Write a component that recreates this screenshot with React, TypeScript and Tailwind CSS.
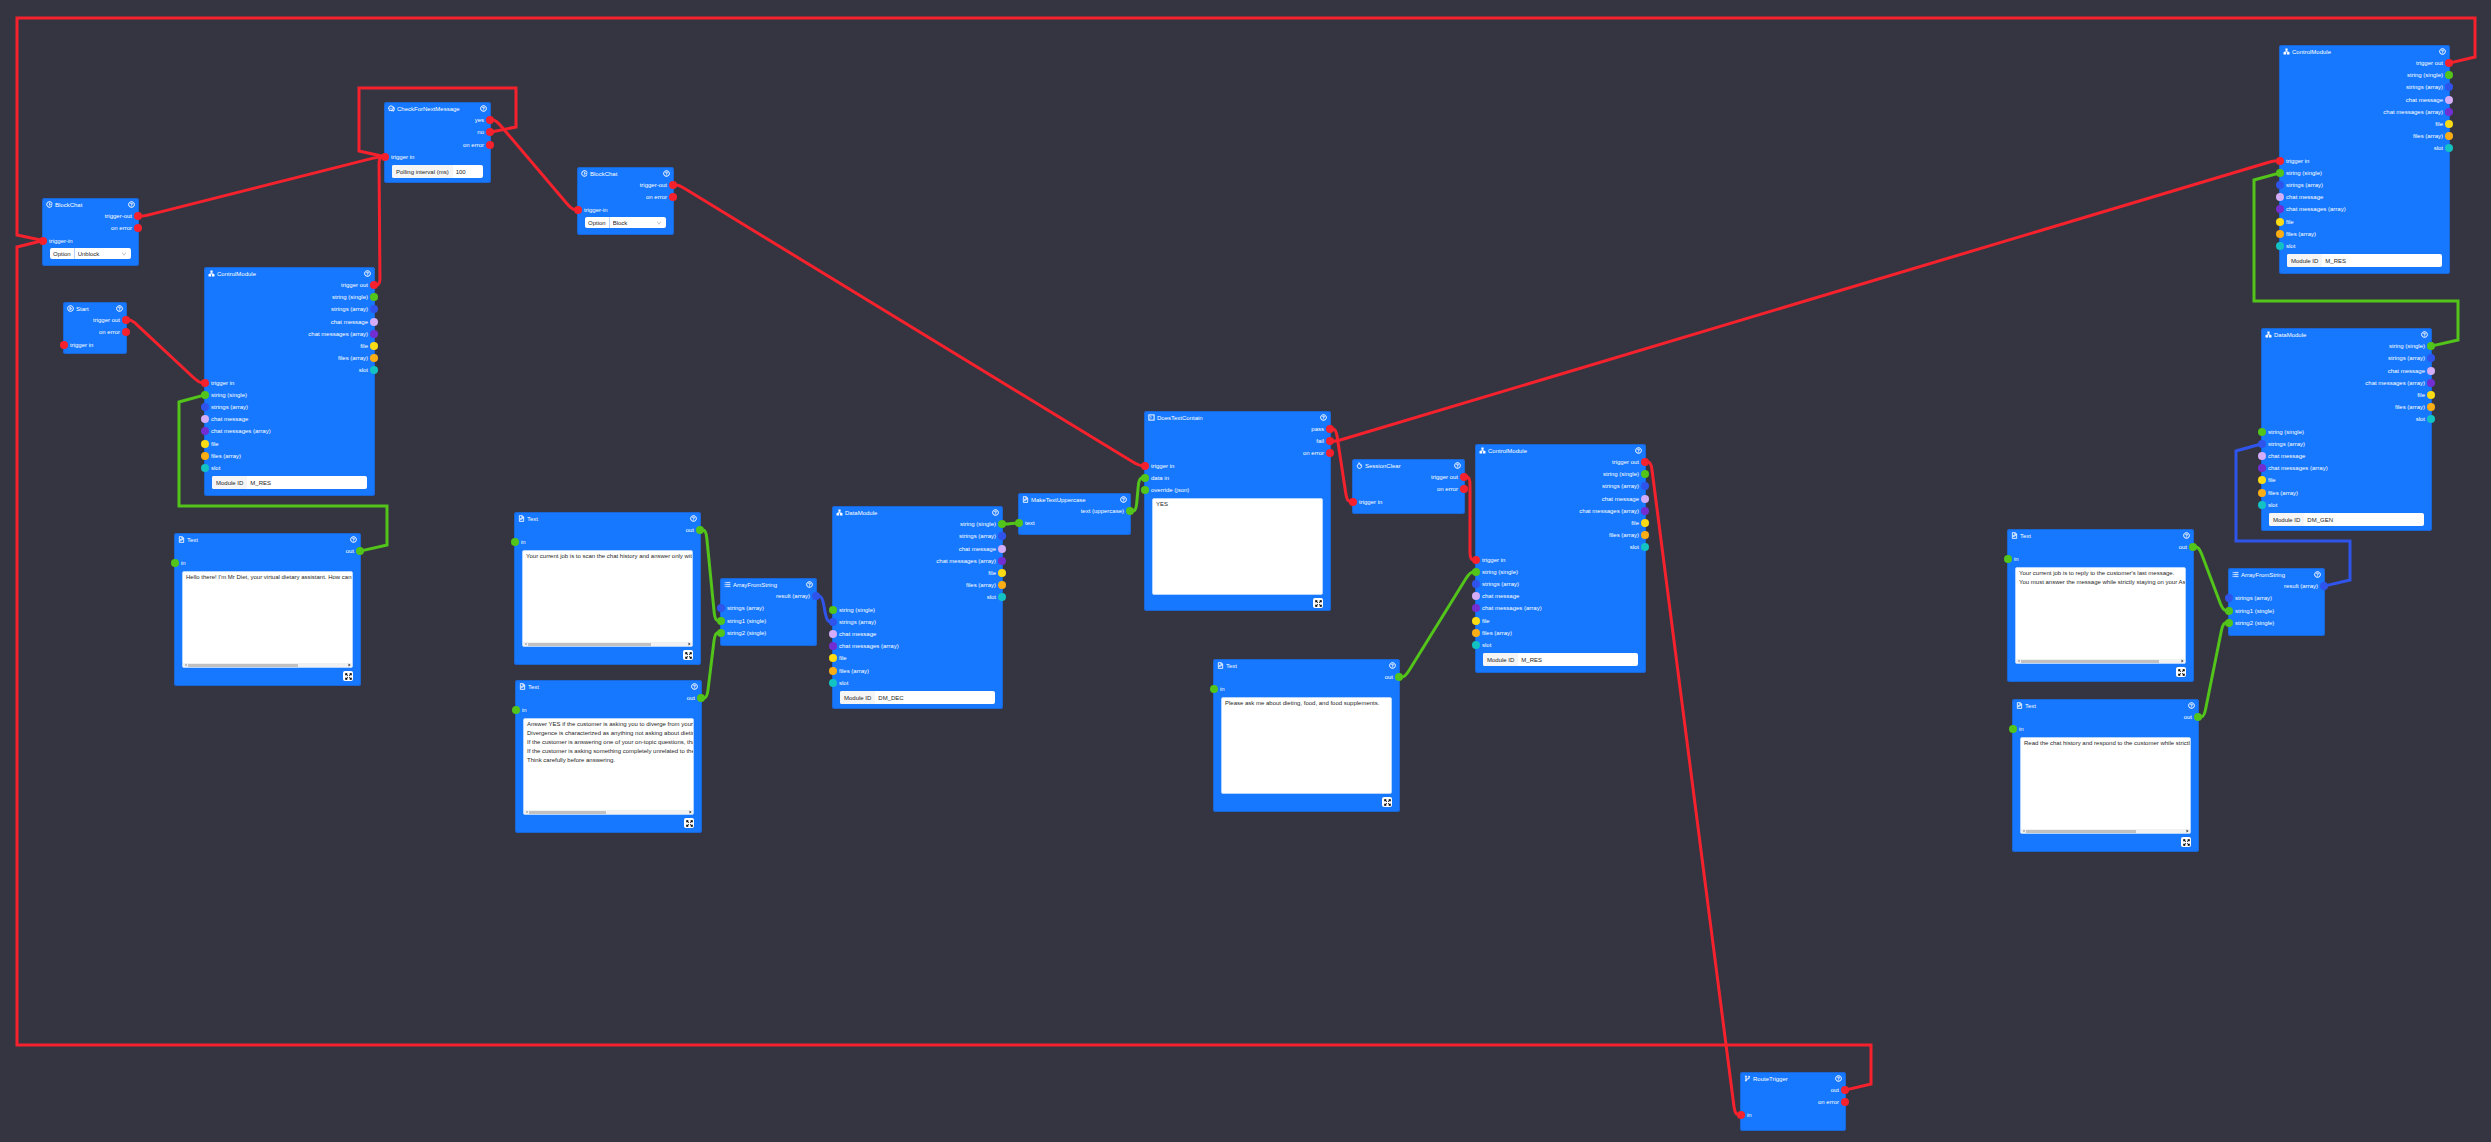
import { useId } from "react";
import type { ReactNode } from "react";
import {
  AiOutlineBranches,
  AiOutlineComment,
  AiOutlineDown,
  AiOutlineFileText,
  AiOutlineFire,
  AiOutlineIssuesClose,
  AiOutlinePlayCircle,
  AiOutlineQuestionCircle,
  AiOutlineUnorderedList,
} from "react-icons/ai";

type Kind = "trigger" | "string" | "strings" | "chat" | "chats" | "file" | "files" | "slot";
type Port = { label: string; kind: Kind };

const DOT: Record<Kind, string> = {
  trigger: "bg-[#f5222d]",
  string: "bg-[#52c41a]",
  strings: "bg-[#2f54eb]",
  chat: "bg-[#d3adf7]",
  chats: "bg-[#722ed1]",
  file: "bg-[#fadb14]",
  files: "bg-[#faad14]",
  slot: "bg-[#13c2c2]",
};

const STROKE = { red: "#f5222d", green: "#52c41a", blue: "#2f54eb" };

const ICON = "size-full stroke-current stroke-[50]";

const HEADER = 12;
const ROW = 12.2;

const t = (label: string): Port => ({ label, kind: "trigger" });
const s = (label: string): Port => ({ label, kind: "string" });
const a = (label: string): Port => ({ label, kind: "strings" });

const DATA: Port[] = [
  s("string (single)"),
  a("strings (array)"),
  { label: "chat message", kind: "chat" },
  { label: "chat messages (array)", kind: "chats" },
  { label: "file", kind: "file" },
  { label: "files (array)", kind: "files" },
  { label: "slot", kind: "slot" },
];

type Content =
  | { type: "input"; label: string; value: string }
  | { type: "select"; label: string; value: string; options: string[] }
  | { type: "text"; label: string; value: string; thumb?: number };

type NodeData = {
  title: string;
  icon: ReactNode;
  x: number;
  y: number;
  w: number;
  h: number;
  outs: Port[];
  ins: Port[];
  content?: Content;
};

function ModuleIcon() {
  return (
    <svg viewBox="-1 -1 14 14" fill="none" stroke="currentColor" className="size-full">
      <rect x="3.8" y="0" width="4.4" height="4.4" fill="currentColor" stroke="none" />
      <path d="M6 4v2.5M2.5 8V6.5h7V8" strokeWidth="1.6" />
      <rect x="0" y="7.2" width="5.2" height="4.8" fill="currentColor" stroke="none" />
      <rect x="6.8" y="7.2" width="5.2" height="4.8" fill="currentColor" stroke="none" />
    </svg>
  );
}

function ContainIcon() {
  return (
    <svg viewBox="-1 -1 14 14" fill="none" stroke="currentColor" className="size-full">
      <rect x="0.8" y="0.8" width="10.4" height="10.4" strokeWidth="2" />
      <path d="M3.5 3.5l2.6 2-2.6 2" strokeWidth="1.5" />
    </svg>
  );
}

function ExpandIcon() {
  return (
    <svg viewBox="0 0 12 12" fill="none" stroke="currentColor" strokeWidth="1.3" className="size-[7px]">
      <path d="M1 4V1h3M8 1h3v3M11 8v3H8M4 11H1V8" />
      <path d="M1.2 1.2l3.4 3.4M10.8 1.2L7.4 4.6M10.8 10.8L7.4 7.4M1.2 10.8l3.4-3.4" strokeWidth="1.8" />
    </svg>
  );
}

const UNBLOCK = ["Unblock", "Block"];

function textNode(x: number, y: number, value: string, thumb?: number): NodeData {
  return {
    title: "Text",
    icon: <AiOutlineFileText className={ICON} />,
    x,
    y,
    w: 187,
    h: 153,
    outs: [s("out")],
    ins: [s("in")],
    content: { type: "text", label: "Text", value, thumb },
  };
}

function controlNode(x: number, y: number): NodeData {
  return {
    title: "ControlModule",
    icon: <ModuleIcon />,
    x,
    y,
    w: 171,
    h: 229,
    outs: [t("trigger out"), ...DATA],
    ins: [t("trigger in"), ...DATA],
    content: { type: "input", label: "Module ID", value: "M_RES" },
  };
}

function dataNode(x: number, y: number, value: string): NodeData {
  return {
    title: "DataModule",
    icon: <ModuleIcon />,
    x,
    y,
    w: 171,
    h: 203,
    outs: DATA,
    ins: DATA,
    content: { type: "input", label: "Module ID", value },
  };
}

function arrayNode(x: number, y: number): NodeData {
  return {
    title: "ArrayFromString",
    icon: <AiOutlineUnorderedList className={ICON} />,
    x,
    y,
    w: 97,
    h: 68,
    outs: [a("result (array)")],
    ins: [a("strings (array)"), s("string1 (single)"), s("string2 (single)")],
  };
}

function blockNode(x: number, y: number, value: string): NodeData {
  return {
    title: "BlockChat",
    icon: <AiOutlineIssuesClose className={ICON} />,
    x,
    y,
    w: 97,
    h: 68,
    outs: [t("trigger-out"), t("on error")],
    ins: [t("trigger-in")],
    content: { type: "select", label: "Option", value, options: UNBLOCK },
  };
}

const NODES = {
  unblock: blockNode(42, 198, "Unblock"),
  start: {
    title: "Start",
    icon: <AiOutlinePlayCircle className={ICON} />,
    x: 63,
    y: 302,
    w: 64,
    h: 52,
    outs: [t("trigger out"), t("on error")],
    ins: [t("trigger in")],
  } as NodeData,
  greet: controlNode(204, 267),
  greetText: textNode(174, 533, "Hello there! I'm Mr Diet, your virtual dietary assistant. How can I help", 110),
  check: {
    title: "CheckForNextMessage",
    icon: <AiOutlineComment className={ICON} />,
    x: 384,
    y: 102,
    w: 107,
    h: 81,
    outs: [t("yes"), t("no"), t("on error")],
    ins: [t("trigger in")],
    content: { type: "input", label: "Polling interval (ms)", value: "100" },
  } as NodeData,
  block: blockNode(577, 167, "Block"),
  scanText: textNode(514, 512, "Your current job is to scan the chat history and answer only with the", 123),
  rulesText: textNode(
    515,
    680,
    [
      "Answer YES if the customer is asking you to diverge from your Assigned",
      "Divergence is characterized as anything not asking about dieting, food",
      "If the customer is answering one of your on-topic questions, that is",
      "If the customer is asking something completely unrelated to the chat",
      "Think carefully before answering.",
    ].join("\n"),
    77,
  ),
  decideArray: arrayNode(720, 578),
  decide: dataNode(832, 506, "DM_DEC"),
  upper: {
    title: "MakeTextUppercase",
    icon: <AiOutlineFileText className={ICON} />,
    x: 1018,
    y: 493,
    w: 113,
    h: 42,
    outs: [s("text (uppercase)")],
    ins: [s("text")],
  } as NodeData,
  contain: {
    title: "DoesTextContain",
    icon: <ContainIcon />,
    x: 1144,
    y: 411,
    w: 187,
    h: 200,
    outs: [t("pass"), t("fail"), t("on error")],
    ins: [t("trigger in"), s("data in"), s("override (json)")],
    content: { type: "text", label: "Contains", value: "YES" },
  } as NodeData,
  clear: {
    title: "SessionClear",
    icon: <AiOutlineFire className={ICON} />,
    x: 1352,
    y: 459,
    w: 113,
    h: 55,
    outs: [t("trigger out"), t("on error")],
    ins: [t("trigger in")],
  } as NodeData,
  offTopicText: textNode(1213, 659, "Please ask me about dieting, food, and food supplements."),
  offTopic: controlNode(1475, 444),
  route: {
    title: "RouteTrigger",
    icon: <AiOutlineBranches className={ICON} />,
    x: 1740,
    y: 1072,
    w: 106,
    h: 59,
    outs: [t("out"), t("on error")],
    ins: [t("in")],
  } as NodeData,
  replyText: textNode(
    2007,
    529,
    "Your current job is to reply to the customer's last message.\nYou must answer the message while strictly staying on your Assigned",
    138,
  ),
  historyText: textNode(
    2012,
    699,
    "Read the chat history and respond to the customer while strictly staying",
    110,
  ),
  replyArray: arrayNode(2228, 568),
  generate: dataNode(2261, 328, "DM_GEN"),
  respond: controlNode(2279, 45),
};

type NodeId = keyof typeof NODES;
type End = [NodeId, number];
type Point = [number, number];

/* Ports are counted from the top of a node, outputs first. */
const EDGES: { from: End; to: End; color: keyof typeof STROKE; via?: Point[] }[] = [
  { from: ["unblock", 0], to: ["check", 3], color: "red" },
  { from: ["start", 0], to: ["greet", 8], color: "red" },
  { from: ["greet", 0], to: ["check", 3], color: "red" },
  { from: ["check", 1], to: ["check", 3], color: "red", via: [[516, 127], [516, 88], [359, 88], [359, 151]] },
  { from: ["check", 0], to: ["block", 2], color: "red" },
  { from: ["block", 0], to: ["contain", 3], color: "red" },
  { from: ["greetText", 0], to: ["greet", 9], color: "green", via: [[387, 545], [387, 506], [179, 506], [179, 402]] },
  { from: ["scanText", 0], to: ["decideArray", 2], color: "green" },
  { from: ["rulesText", 0], to: ["decideArray", 3], color: "green" },
  { from: ["decideArray", 0], to: ["decide", 8], color: "blue" },
  { from: ["decide", 0], to: ["upper", 1], color: "green" },
  { from: ["upper", 0], to: ["contain", 4], color: "green" },
  { from: ["contain", 0], to: ["clear", 2], color: "red" },
  { from: ["contain", 1], to: ["respond", 8], color: "red" },
  { from: ["clear", 0], to: ["offTopic", 8], color: "red" },
  { from: ["offTopicText", 0], to: ["offTopic", 9], color: "green" },
  { from: ["offTopic", 0], to: ["route", 2], color: "red" },
  { from: ["route", 0], to: ["unblock", 2], color: "red", via: [[1871, 1084], [1871, 1045], [17, 1045], [17, 247]] },
  { from: ["respond", 0], to: ["unblock", 2], color: "red", via: [[2475, 57], [2475, 18], [17, 18], [17, 235]] },
  { from: ["generate", 0], to: ["respond", 9], color: "green", via: [[2458, 340], [2458, 301], [2254, 301], [2254, 180]] },
  { from: ["replyArray", 0], to: ["generate", 8], color: "blue", via: [[2350, 580], [2350, 541], [2236, 541], [2236, 451]] },
  { from: ["replyText", 0], to: ["replyArray", 2], color: "green" },
  { from: ["historyText", 0], to: ["replyArray", 3], color: "green" },
];

function portPoint([id, index]: End): Point {
  const node = NODES[id];
  const y = node.y + HEADER + ROW * (index + 0.5);
  return [index < node.outs.length ? node.x + node.w - 1 : node.x + 1, y];
}

function edgePath(start: Point, end: Point, via?: Point[]) {
  if (via) {
    return "M" + [start, ...via, end].map((p) => p.join(" ")).join("L");
  }
  const p: Point = [start[0] + 6, start[1]];
  const q: Point = [end[0] - 6, end[1]];
  const length = Math.hypot(q[0] - p[0], q[1] - p[1]) || 1;
  const r = Math.min(8, length / 3);
  const dx = ((q[0] - p[0]) / length) * r;
  const dy = ((q[1] - p[1]) / length) * r;
  return `M${start}L${p[0] - 3} ${p[1]}Q${p} ${p[0] + dx} ${p[1] + dy}L${q[0] - dx} ${q[1] - dy}Q${q} ${q[0] + 3} ${q[1]}L${end}`;
}

function Ports({ outs, ins }: { outs: Port[]; ins: Port[] }) {
  return (
    <ul className="grid auto-rows-fr" style={{ height: Math.round((outs.length + ins.length) * ROW) }}>
      {outs.map((port) => (
        <li key={"out" + port.label} className="-mr-[3px] flex min-h-0 items-center justify-end gap-0.5 whitespace-nowrap">
          <span>{port.label}</span>
          <span className={`size-2 shrink-0 rounded-full ${DOT[port.kind]}`} />
        </li>
      ))}
      {ins.map((port) => (
        <li key={"in" + port.label} className="-ml-[3px] flex min-h-0 items-center gap-0.5 whitespace-nowrap">
          <span className={`size-2 shrink-0 rounded-full ${DOT[port.kind]}`} />
          <span>{port.label}</span>
        </li>
      ))}
    </ul>
  );
}

function Field({ content }: { content: Content }) {
  const id = useId();

  if (content.type === "input") {
    return (
      <div className="mx-2 mt-0.5 flex h-[13px] items-stretch overflow-hidden rounded-xs bg-white text-[#262626]">
        <label htmlFor={id} className="flex items-center bg-[#f5f5f5] px-1 whitespace-nowrap">
          {content.label}
        </label>
        <input id={id} defaultValue={content.value} className="w-0 min-w-0 flex-1 px-[3px] outline-none" />
      </div>
    );
  }

  if (content.type === "select") {
    return (
      <div className="mx-2 mt-px flex h-[11px] items-stretch overflow-hidden rounded-xs bg-white text-[#262626]">
        <label htmlFor={id} className="flex items-center border-r border-[#b5d3ff] px-[3px] whitespace-nowrap">
          {content.label}
        </label>
        <select id={id} defaultValue={content.value} className="w-0 min-w-0 flex-1 appearance-none px-[3px] outline-none">
          {content.options.map((option) => (
            <option key={option}>{option}</option>
          ))}
        </select>
        <AiOutlineDown className="mr-1 size-[6px] self-center text-[#a6a6a6]" />
      </div>
    );
  }

  return (
    <div className="mx-2 mt-0.5 flex flex-col items-end gap-[3px]">
      <div className="flex h-[97px] w-full flex-col overflow-hidden rounded-xs border border-[#b5d3ff] bg-white">
        <textarea
          id={id}
          aria-label={content.label}
          wrap="off"
          defaultValue={content.value}
          className="min-h-0 w-full flex-1 resize-none overflow-hidden px-[3px] pt-px leading-[9px] whitespace-pre text-[#262626] outline-none"
        />
        {content.thumb !== undefined && (
          <div className="flex h-1 shrink-0 items-center bg-[#f1f1f1]">
            <svg viewBox="0 0 5 4" className="h-1 w-[5px] shrink-0">
              <path d="M3.5 .8v2.4L1.8 2z" fill="#8a8a8a" />
            </svg>
            <span className="h-[3px] bg-[#c1c1c1]" style={{ width: content.thumb }} />
            <svg viewBox="0 0 5 4" className="ml-auto h-1 w-[5px] shrink-0">
              <path d="M1.5 .6v2.8L3.6 2z" fill="#404040" />
            </svg>
          </div>
        )}
      </div>
      <button
        type="button"
        aria-label="Expand editor"
        className="flex size-[10px] items-center justify-center rounded-xs bg-white text-black"
      >
        <ExpandIcon />
      </button>
    </div>
  );
}

function FlowNode({ node }: { node: NodeData }) {
  return (
    <section
      className="absolute rounded-[3px] bg-[#1677ff] text-white ring-1 ring-[#1b66d6] ring-inset"
      style={{ left: node.x, top: node.y, width: node.w, height: node.h }}
    >
      <header className="flex h-3 items-center gap-0.5 px-1 pt-px">
        <span className="size-[7px] shrink-0">{node.icon}</span>
        <h2 className="whitespace-nowrap">{node.title}</h2>
        <button type="button" aria-label={`About ${node.title}`} className="ml-auto size-[7px]">
          <AiOutlineQuestionCircle className={ICON} />
        </button>
      </header>
      <Ports outs={node.outs} ins={node.ins} />
      {node.content && <Field content={node.content} />}
    </section>
  );
}

export default function App() {
  return (
    <main className="relative min-h-screen w-full overflow-hidden bg-[#353541] font-['Liberation_Sans',Arial,sans-serif] text-[6px] leading-[8px]">
      <svg className="absolute inset-0 size-full" fill="none" strokeWidth="3" aria-hidden="true">
        {EDGES.map((edge, index) => (
          <path
            key={index}
            d={edgePath(portPoint(edge.from), portPoint(edge.to), edge.via)}
            stroke={STROKE[edge.color]}
          />
        ))}
      </svg>
      {Object.entries(NODES).map(([id, node]) => (
        <FlowNode key={id} node={node} />
      ))}
    </main>
  );
}
